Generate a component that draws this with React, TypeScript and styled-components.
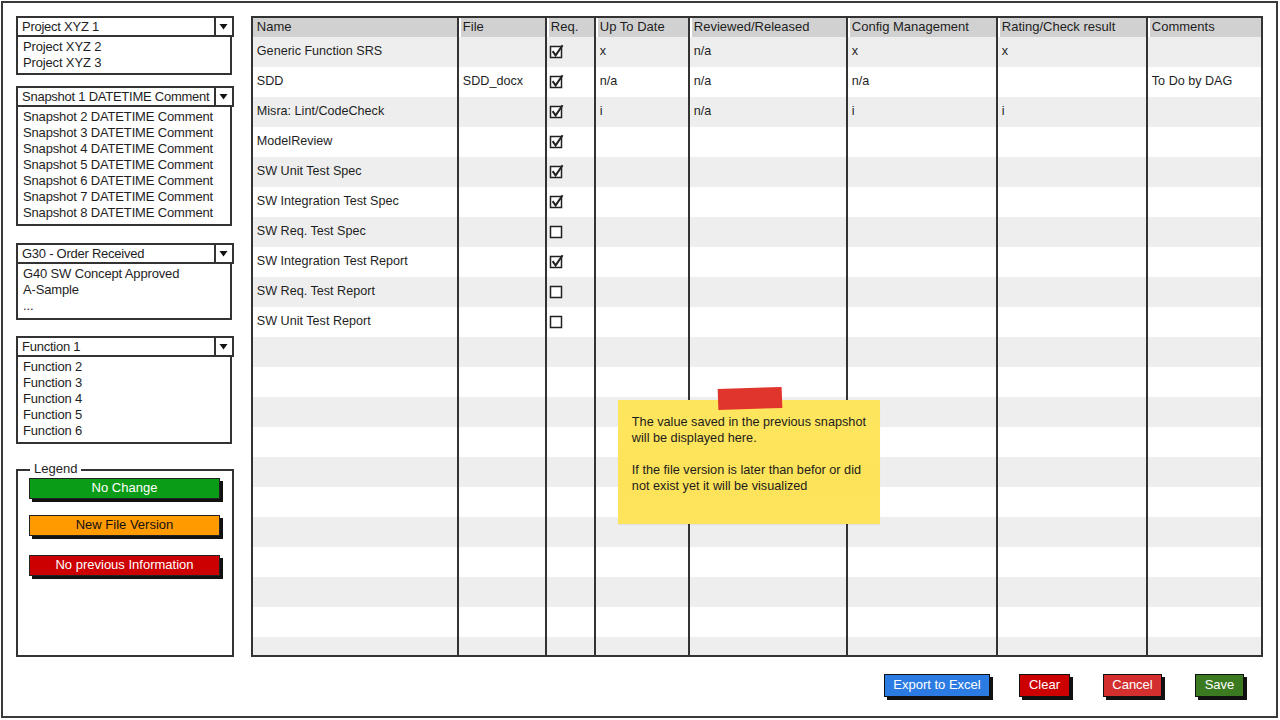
import React from 'react';
import styled, { createGlobalStyle } from 'styled-components';

const GlobalStyle = createGlobalStyle`
  html, body { margin: 0; padding: 0; background: #fff; }
  body { font-family: "Liberation Sans", Arial, sans-serif; color: #1e1e1e; }
  #root { width: 1280px; height: 720px; overflow: hidden; }
`;

const Frame = styled.div`
  box-sizing: border-box;
  width: 1277px;
  height: 717px;
  margin: 1px 0 0 1px;
  border: 2px solid #3a3a3a;
  padding: 13px 13px 0 13px;
  display: flex;
  flex-direction: column;
`;

const Main = styled.div`
  display: flex;
  gap: 17px;
  height: 641px;
`;

const Sidebar = styled.div`
  width: 218px;
  display: flex;
  flex-direction: column;
`;

const Combo = styled.div<{ $top: number }>`
  margin-top: ${p => p.$top}px;
  display: flex;
  flex-direction: column;
`;

const ComboHead = styled.div`
  box-sizing: border-box;
  display: flex;
  height: 21px;
  border: 2px solid #333;
`;

const ComboValue = styled.div`
  flex: 1;
  padding-left: 4px;
  font-size: 13px;
  letter-spacing: -0.25px;
  line-height: 17px;
  white-space: nowrap;
  overflow: hidden;
`;

const ComboArrow = styled.div`
  width: 16px;
  border-left: 2px solid #333;
  display: flex;
  align-items: center;
  justify-content: center;
`;

const ComboList = styled.div<{ $h: number }>`
  box-sizing: border-box;
  height: ${p => p.$h}px;
  margin-right: 2px;
  border: 2px solid #333;
  border-top: none;
  padding: 2px 0 0 5px;
`;

const ComboItem = styled.div`
  font-size: 13px;
  letter-spacing: -0.15px;
  line-height: 16px;
  white-space: nowrap;
`;

const LegendBox = styled.div`
  position: relative;
  box-sizing: border-box;
  margin-top: 25px;
  flex: 1;
  border: 2px solid #333;
  padding: 7px 0 0 11px;
  display: flex;
  flex-direction: column;
`;

const LegendTitle = styled.div`
  position: absolute;
  top: -10px;
  left: 12px;
  padding: 0 4px;
  background: #fff;
  font-size: 13px;
  line-height: 16px;
`;

const LegendChip = styled.div<{ $bg: string; $fg: string; $mt: number }>`
  box-sizing: border-box;
  width: 191px;
  height: 21px;
  margin-top: ${p => p.$mt}px;
  border: 1.5px solid #222;
  background: ${p => p.$bg};
  color: ${p => p.$fg};
  box-shadow: 3px 3px 0 #111;
  font-size: 13px;
  line-height: 18px;
  text-align: center;
`;

const TableBox = styled.div`
  position: relative;
  box-sizing: border-box;
  width: 1013px;
  height: 641px;
  border: 2px solid #333;
  overflow: hidden;
`;

const COLS = '204px 88px 49px 94px 158px 150px 150px 116px';

const Row = styled.div<{ $shade: boolean; $h: number }>`
  display: grid;
  grid-template-columns: ${COLS};
  height: ${p => p.$h}px;
  background: ${p => (p.$shade ? '#eeeeee' : '#ffffff')};
`;

const HeadCell = styled.div<{ $first: boolean }>`
  background: #d1d1d1;
  border-left: ${p => (p.$first ? 'none' : '2px solid #333')};
  box-shadow: ${p => (p.$first ? 'none' : 'inset 2px 0 0 #fff')};
  padding-left: 4px;
  font-size: 13px;
  line-height: 18px;
  white-space: nowrap;
`;

const Cell = styled.div<{ $first: boolean; $pad?: number }>`
  display: flex;
  align-items: center;
  padding: 0 0 3px ${p => p.$pad ?? 4}px;
  border-left: ${p => (p.$first ? 'none' : '2px solid #333')};
  font-size: 12.6px;
  white-space: nowrap;
`;

const Note = styled.div`
  position: absolute;
  left: 365px;
  top: 382px;
  box-sizing: border-box;
  width: 262px;
  height: 124px;
  padding: 14px 0 0 14px;
  background: linear-gradient(180deg, #fde65e 0%, #fde35a 60%, #fde45c 100%);
  box-shadow: 0 1px 1px rgba(0, 0, 0, 0.06);
  font-size: 12.7px;
  line-height: 16px;
  color: #1c1c1c;
`;

const Tape = styled.div`
  position: absolute;
  left: 100px;
  top: -12px;
  width: 64px;
  height: 21px;
  background: #e0352d;
  transform: rotate(-2deg);
`;

const NotePara = styled.p`
  margin: 0 0 16px 0;
  white-space: nowrap;
`;

const ButtonBar = styled.div`
  display: flex;
  justify-content: flex-end;
  margin-top: 17px;
  padding-right: 19px;
`;

const ActionButton = styled.div<{ $bg: string; $w: number; $gap: number }>`
  box-sizing: border-box;
  width: ${p => p.$w}px;
  height: 23px;
  margin-left: ${p => p.$gap}px;
  background: ${p => p.$bg};
  border: 1.5px solid #111;
  box-shadow: 3px 3px 0 #111;
  color: #fff;
  font-size: 13px;
  line-height: 20px;
  text-align: center;
`;

const Arrow = () => (
  <svg width="9" height="7" viewBox="0 0 9 7">
    <path d="M0.5 1 L8.5 1 L4.5 6.5 Z" fill="#111" />
  </svg>
);

const CheckBox = ({ checked }: { checked: boolean }) => (
  <svg width="16" height="16" viewBox="0 0 16 16">
    <rect x="1.5" y="3.5" width="11" height="11" fill="#fff" stroke="#222" strokeWidth="1.5" />
    {checked && <path d="M3.6 8.2 L6.6 12.4 L13.6 2.2" fill="none" stroke="#222" strokeWidth="2" />}
  </svg>
);

type Dropdown = { top: number; value: string; items: string[]; h: number };

const dropdowns: Dropdown[] = [
  { top: 0, value: 'Project XYZ 1', items: ['Project XYZ 2', 'Project XYZ 3'], h: 38 },
  {
    top: 11,
    value: 'Snapshot 1 DATETIME Comment',
    items: [2, 3, 4, 5, 6, 7, 8].map(n => `Snapshot ${n} DATETIME Comment`),
    h: 119,
  },
  { top: 17, value: 'G30 - Order Received', items: ['G40 SW Concept Approved', 'A-Sample', '...'], h: 56 },
  { top: 16, value: 'Function 1', items: [2, 3, 4, 5, 6].map(n => `Function ${n}`), h: 87 },
];

const legend = [
  { label: 'No Change', bg: '#0a9c16', fg: '#fff', mt: 0 },
  { label: 'New File Version', bg: '#ff9a00', fg: '#111', mt: 16 },
  { label: 'No previous Information', bg: '#cc0000', fg: '#fff', mt: 19 },
];

const headers = [
  'Name',
  'File',
  'Req.',
  'Up To Date',
  'Reviewed/Released',
  'Config Management',
  'Rating/Check result',
  'Comments',
];

type Item = {
  name: string;
  file?: string;
  req: boolean;
  up?: string;
  rev?: string;
  conf?: string;
  rate?: string;
  com?: string;
};

const items: Item[] = [
  { name: 'Generic Function SRS', req: true, up: 'x', rev: 'n/a', conf: 'x', rate: 'x' },
  { name: 'SDD', file: 'SDD_docx', req: true, up: 'n/a', rev: 'n/a', conf: 'n/a', com: 'To Do by DAG' },
  { name: 'Misra: Lint/CodeCheck', req: true, up: 'i', rev: 'n/a', conf: 'i', rate: 'i' },
  { name: 'ModelReview', req: true },
  { name: 'SW Unit Test Spec', req: true },
  { name: 'SW Integration Test Spec', req: true },
  { name: 'SW Req. Test Spec', req: false },
  { name: 'SW Integration Test Report', req: true },
  { name: 'SW Req. Test Report', req: false },
  { name: 'SW Unit Test Report', req: false },
];

const TOTAL_ROWS = 21;

export default function App() {
  const rows: (Item | null)[] = [
    ...items,
    ...Array.from({ length: TOTAL_ROWS - items.length }, () => null),
  ];

  return (
    <>
      <GlobalStyle />
      <Frame>
        <Main>
          <Sidebar>
            {dropdowns.map(d => (
              <Combo key={d.value} $top={d.top}>
                <ComboHead>
                  <ComboValue>{d.value}</ComboValue>
                  <ComboArrow>
                    <Arrow />
                  </ComboArrow>
                </ComboHead>
                <ComboList $h={d.h}>
                  {d.items.map(i => (
                    <ComboItem key={i}>{i}</ComboItem>
                  ))}
                </ComboList>
              </Combo>
            ))}

            <LegendBox>
              <LegendTitle>Legend</LegendTitle>
              {legend.map(l => (
                <LegendChip key={l.label} $bg={l.bg} $fg={l.fg} $mt={l.mt}>
                  {l.label}
                </LegendChip>
              ))}
            </LegendBox>
          </Sidebar>

          <TableBox>
            <Row $shade={false} $h={19}>
              {headers.map((h, i) => (
                <HeadCell key={h} $first={i === 0}>
                  {h}
                </HeadCell>
              ))}
            </Row>
            {rows.map((r, idx) => (
              <Row key={idx} $shade={idx % 2 === 0} $h={30}>
                <Cell $first>{r?.name}</Cell>
                <Cell $first={false}>{r?.file}</Cell>
                <Cell $first={false} $pad={2}>
                  {r && <CheckBox checked={r.req} />}
                </Cell>
                <Cell $first={false}>{r?.up}</Cell>
                <Cell $first={false}>{r?.rev}</Cell>
                <Cell $first={false}>{r?.conf}</Cell>
                <Cell $first={false}>{r?.rate}</Cell>
                <Cell $first={false}>{r?.com}</Cell>
              </Row>
            ))}

            <Note>
              <Tape />
              <NotePara>
                The value saved in the previous snapshot
                <br />
                will be displayed here.
              </NotePara>
              <NotePara>
                If the file version is later than befor or did
                <br />
                not exist yet it will be visualized
              </NotePara>
            </Note>
          </TableBox>
        </Main>

        <ButtonBar>
          <ActionButton $bg="#2b7be2" $w={106} $gap={0}>Export to Excel</ActionButton>
          <ActionButton $bg="#cc0000" $w={51} $gap={29}>Clear</ActionButton>
          <ActionButton $bg="#d32f2f" $w={59} $gap={33}>Cancel</ActionButton>
          <ActionButton $bg="#3b7a21" $w={49} $gap={33}>Save</ActionButton>
        </ButtonBar>
      </Frame>
    </>
  );
}
